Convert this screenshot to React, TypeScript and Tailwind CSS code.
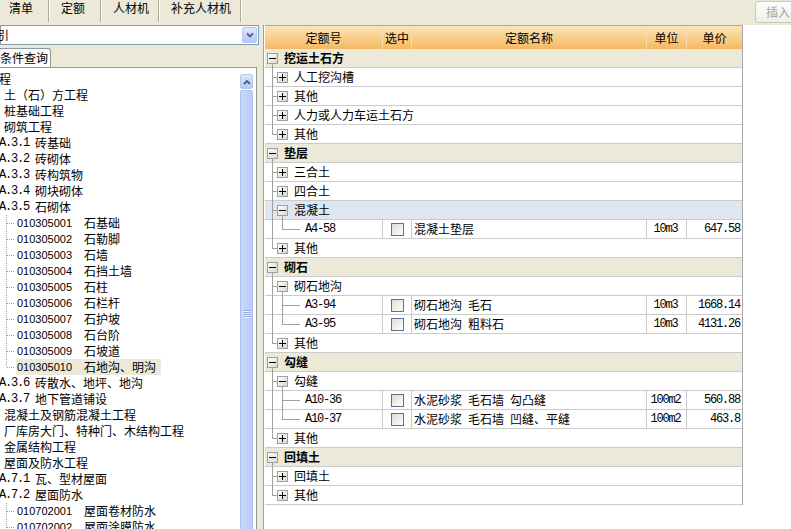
import React from "react";

const CJK = "font-['Noto_Sans_CJK_SC',sans-serif]";
const MONO = "font-['Liberation_Mono','Noto_Sans_CJK_SC',monospace] tracking-[-1.2px]";
const LINE = "#a0a0a0";

type TreeNode = { lvl: 0 | 1 | 2 | 3; code?: string; name: string; last?: boolean; selected?: boolean };

const tree: TreeNode[] = [
  { lvl: 0, name: "程" },
  { lvl: 1, name: "土（石）方工程" },
  { lvl: 1, name: "桩基础工程" },
  { lvl: 1, name: "砌筑工程" },
  { lvl: 2, code: "A.3.1", name: "砖基础" },
  { lvl: 2, code: "A.3.2", name: "砖砌体" },
  { lvl: 2, code: "A.3.3", name: "砖构筑物" },
  { lvl: 2, code: "A.3.4", name: "砌块砌体" },
  { lvl: 2, code: "A.3.5", name: "石砌体" },
  { lvl: 3, code: "010305001", name: "石基础" },
  { lvl: 3, code: "010305002", name: "石勒脚" },
  { lvl: 3, code: "010305003", name: "石墙" },
  { lvl: 3, code: "010305004", name: "石挡土墙" },
  { lvl: 3, code: "010305005", name: "石柱" },
  { lvl: 3, code: "010305006", name: "石栏杆" },
  { lvl: 3, code: "010305007", name: "石护坡" },
  { lvl: 3, code: "010305008", name: "石台阶" },
  { lvl: 3, code: "010305009", name: "石坡道" },
  { lvl: 3, code: "010305010", name: "石地沟、明沟", last: true, selected: true },
  { lvl: 2, code: "A.3.6", name: "砖散水、地坪、地沟" },
  { lvl: 2, code: "A.3.7", name: "地下管道铺设" },
  { lvl: 1, name: "混凝土及钢筋混凝土工程" },
  { lvl: 1, name: "厂库房大门、特种门、木结构工程" },
  { lvl: 1, name: "金属结构工程" },
  { lvl: 1, name: "屋面及防水工程" },
  { lvl: 2, code: "A.7.1", name: "瓦、型材屋面" },
  { lvl: 2, code: "A.7.2", name: "屋面防水" },
  { lvl: 3, code: "010702001", name: "屋面卷材防水" },
  { lvl: 3, code: "010702002", name: "屋面涂膜防水" },
];

type Row =
  | { t: "group"; name: string }
  | { t: "sub"; name: string; open?: boolean; last?: boolean; sel?: boolean }
  | { t: "leaf"; code: string; name: string; unit: string; price: string; last?: boolean };

const rows: Row[] = [
  { t: "group", name: "挖运土石方" },
  { t: "sub", name: "人工挖沟槽" },
  { t: "sub", name: "其他" },
  { t: "sub", name: "人力或人力车运土石方" },
  { t: "sub", name: "其他", last: true },
  { t: "group", name: "垫层" },
  { t: "sub", name: "三合土" },
  { t: "sub", name: "四合土" },
  { t: "sub", name: "混凝土", open: true, sel: true },
  { t: "leaf", code: "A4-58", name: "混凝土垫层", unit: "10m3", price: "647.58", last: true },
  { t: "sub", name: "其他", last: true },
  { t: "group", name: "砌石" },
  { t: "sub", name: "砌石地沟", open: true },
  { t: "leaf", code: "A3-94", name: "砌石地沟\u2002毛石", unit: "10m3", price: "1668.14" },
  { t: "leaf", code: "A3-95", name: "砌石地沟\u2002粗料石", unit: "10m3", price: "4131.26", last: true },
  { t: "sub", name: "其他", last: true },
  { t: "group", name: "勾缝" },
  { t: "sub", name: "勾缝", open: true },
  { t: "leaf", code: "A10-36", name: "水泥砂浆\u2002毛石墙\u2002勾凸缝", unit: "100m2", price: "560.88" },
  { t: "leaf", code: "A10-37", name: "水泥砂浆\u2002毛石墙\u2002凹缝、平缝", unit: "100m2", price: "463.8", last: true },
  { t: "sub", name: "其他", last: true },
  { t: "group", name: "回填土" },
  { t: "sub", name: "回填土" },
  { t: "sub", name: "其他", last: true },
];

function Toggle({ open }: { open?: boolean }) {
  return (
    <svg width="11" height="11" viewBox="0 0 11 11" className="block shrink-0" shapeRendering="crispEdges">
      <defs>
        <linearGradient id="tg" x1="0" y1="0" x2="1" y2="1">
          <stop offset="0" stopColor="#ffffff" />
          <stop offset="1" stopColor="#d9d6ca" />
        </linearGradient>
      </defs>
      <rect x="0.5" y="0.5" width="10" height="10" fill="url(#tg)" stroke="#98a1a8" />
      <path d="M2 5.5h7" stroke="#000" />
      {!open && <path d="M5.5 2v7" stroke="#000" />}
    </svg>
  );
}

function Chevron({ up }: { up?: boolean }) {
  return (
    <svg width="8" height="6" viewBox="0 0 8 6">
      <path d={up ? "M1 5l3-3 3 3" : "M1 1.5l3 3 3-3"} fill="none" stroke="#4d6185" strokeWidth="1.8" />
    </svg>
  );
}

function Guides({ segs }: { segs: number[][] }) {
  return (
    <svg className="absolute left-0 top-0 pointer-events-none" width="40" height="19" shapeRendering="crispEdges">
      {segs.map((s, i) => (
        <line key={i} x1={s[0]} y1={s[1]} x2={s[2]} y2={s[3]} stroke={LINE} />
      ))}
    </svg>
  );
}

function TopBar() {
  const tabs = [
    { label: "清单", w: "w-[49px] pl-[9px]" },
    { label: "定额", w: "w-[52px] pl-[12px]" },
    { label: "人材机", w: "w-[58px] pl-[12px]" },
    { label: "补充人材机", w: "w-[82px] pl-[12px]" },
  ];
  return (
    <div className="h-[25px] shrink-0 flex items-start">
      {tabs.map((t) => (
        <div
          key={t.label}
          className={`${t.w} h-[22px] leading-[16px] border-r border-[#aca899] shadow-[1px_0_0_#ffffff] whitespace-nowrap`}
        >
          {t.label}
        </div>
      ))}
      <div className="ml-auto -mr-[4px] mt-[1px] h-[22px] w-[40px] rounded-[3px] border border-[#cac8bb] bg-gradient-to-b from-[#fefefe] to-[#efeee8] pl-[10px] leading-[20px] text-[#a5a49c]">
        插入
      </div>
    </div>
  );
}

function TreeRow({ n }: { n: TreeNode }) {
  if (n.lvl === 0) return <div className="h-[16px] leading-[16px] -ml-[1px] whitespace-nowrap">{n.name}</div>;
  if (n.lvl === 1) return <div className="h-[16px] leading-[16px] pl-[4px] whitespace-nowrap">{n.name}</div>;
  if (n.lvl === 2)
    return (
      <div className="h-[16px] leading-[16px] -ml-[1px] flex whitespace-nowrap">
        <span className={`w-[36px] shrink-0 ${MONO}`}>{n.code}</span>
        <span>{n.name}</span>
      </div>
    );
  return (
    <div className="h-[16px] leading-[16px] flex whitespace-nowrap">
      <svg width="16" height="16" className="shrink-0" shapeRendering="crispEdges">
        <line x1="6.5" y1="0" x2="6.5" y2={n.last ? 8 : 16} stroke={LINE} strokeDasharray="1 1" />
        <line x1="7" y1="8.5" x2="15" y2="8.5" stroke={LINE} strokeDasharray="1 1" />
      </svg>
      <div className={`flex h-[16px] pl-[1px] pr-[5px] ${n.selected ? "bg-[#ece9d8]" : ""}`}>
        <span className="w-[67px] shrink-0 font-['Liberation_Sans',sans-serif] text-[11px]">{n.code}</span>
        <span>{n.name}</span>
      </div>
    </div>
  );
}

function LeftPane() {
  return (
    <div className="w-[259px] shrink-0 flex flex-col">
      <div className="h-[20px] shrink-0 border border-[#7f9db9] bg-white flex items-center">
        <span className="-ml-[4px] leading-[16px]">引</span>
        <div className="ml-auto mr-[1px] h-[16px] w-[15px] rounded-[2px] border border-[#b7c8f0] bg-gradient-to-b from-[#dce6fd] to-[#b4c8f6] flex items-center justify-center">
          <Chevron />
        </div>
      </div>
      <div className="mt-[3px] h-[19px] w-[51px] shrink-0 border-t border-r border-[#919b9c] rounded-tr-[3px] bg-[#fbfbf8] leading-[17px] whitespace-nowrap">
        条件查询
      </div>
      <div className="w-[257px] flex-1 min-h-0 border-t border-r border-[#919b9c] bg-white flex overflow-hidden">
        <div className="flex-1 min-w-0 overflow-hidden pt-[3px]">
          {tree.map((n, i) => (
            <TreeRow key={i} n={n} />
          ))}
        </div>
        <div className="w-[13px] mr-[3px] shrink-0 pt-[6px] flex flex-col">
          <div className="h-[15px] shrink-0 rounded-[2px] border border-[#b4c6ef] bg-gradient-to-b from-[#dbe5fd] to-[#b6c9f6] flex items-center justify-center">
            <Chevron up />
          </div>
          <div className="mt-[1px] h-[446px] shrink-0 rounded-[2px] border border-[#adc1ef] bg-gradient-to-r from-[#c9d8fd] to-[#b9cbf8] flex flex-col items-center justify-center gap-[1px]">
            {[0, 1, 2, 3].map((k) => (
              <div key={k} className="h-[1px] w-[6px] bg-[#8ea5dc] shadow-[0_1px_0_#eef3ff]" />
            ))}
          </div>
        </div>
      </div>
    </div>
  );
}

function GridRow({ r }: { r: Row }) {
  const base = "h-[19px] border-b border-[#cbcbcb] flex items-center relative";
  if (r.t === "group")
    return (
      <div className={`${base} bg-[#ece9d8] pl-[2px]`}>
        <Guides segs={[[7.5, 15, 7.5, 19]]} />
        <Toggle open />
        <span className="ml-[6px] font-bold leading-[16px]">{r.name}</span>
      </div>
    );
  if (r.t === "sub") {
    const segs = [
      [7.5, 0, 7.5, r.last ? 9.5 : 19],
      [7.5, 9.5, 12, 9.5],
    ];
    if (r.open) segs.push([17.5, 15, 17.5, 19]);
    return (
      <div className={`${base} pl-[12px] ${r.sel ? "bg-[#dde6f1]" : ""}`}>
        <Guides segs={segs} />
        <Toggle open={r.open} />
        <span className="ml-[6px] leading-[16px] whitespace-pre">{r.name}</span>
      </div>
    );
  }
  return (
    <div className={`${base} items-stretch`}>
      <div className="w-[118px] shrink-0 border-r border-[#cbcbcb] pl-[40px] flex items-center relative">
        <Guides
          segs={[
            [7.5, 0, 7.5, 19],
            [17.5, 0, 17.5, r.last ? 9.5 : 19],
            [17.5, 9.5, 35, 9.5],
          ]}
        />
        <span className={MONO}>{r.code}</span>
      </div>
      <div className="w-[29px] shrink-0 border-r border-[#cbcbcb] flex items-center justify-center">
        <div className="h-[13px] w-[13px] border border-[#5a7190] bg-gradient-to-br from-[#dcdcd7] to-[#ffffff]" />
      </div>
      <div className="w-[235px] shrink-0 border-r border-[#cbcbcb] pl-[2px] flex items-center whitespace-pre">{r.name}</div>
      <div className={`w-[40px] shrink-0 border-r border-[#cbcbcb] flex items-center justify-center pr-[2px] ${MONO}`}>{r.unit}</div>
      <div className={`flex-1 flex items-center justify-end pr-[2px] ${MONO}`}>{r.price}</div>
    </div>
  );
}

function RightPane() {
  const heads = [
    { label: "定额号", w: "w-[118px]" },
    { label: "选中", w: "w-[29px]" },
    { label: "定额名称", w: "w-[235px]" },
    { label: "单位", w: "w-[40px]" },
    { label: "单价", w: "flex-1" },
  ];
  return (
    <div className="flex-1 min-w-0 bg-white border-l border-[#a0a0a0]">
      <div className="w-[478px] ml-[1px] border-t border-r border-[#a8a8a8]">
        <div className="h-[23px] flex bg-gradient-to-b from-[#fde5b6] to-[#f5b85f]">
          {heads.map((h, i) => (
            <div
              key={h.label}
              className={`${h.w} shrink-0 flex items-center justify-center ${i < 4 ? "border-r border-[#f8dcae]" : ""}`}
            >
              {h.label}
            </div>
          ))}
        </div>
        {rows.map((r, i) => (
          <GridRow key={i} r={r} />
        ))}
      </div>
    </div>
  );
}

export default function App() {
  return (
    <div className={`w-[791px] h-[529px] overflow-hidden bg-[#ece9d8] text-[12px] text-black flex flex-col ${CJK}`}>
      <TopBar />
      <div className="flex flex-1 min-h-0">
        <LeftPane />
        <div className="w-[4px] shrink-0" />
        <RightPane />
      </div>
    </div>
  );
}
